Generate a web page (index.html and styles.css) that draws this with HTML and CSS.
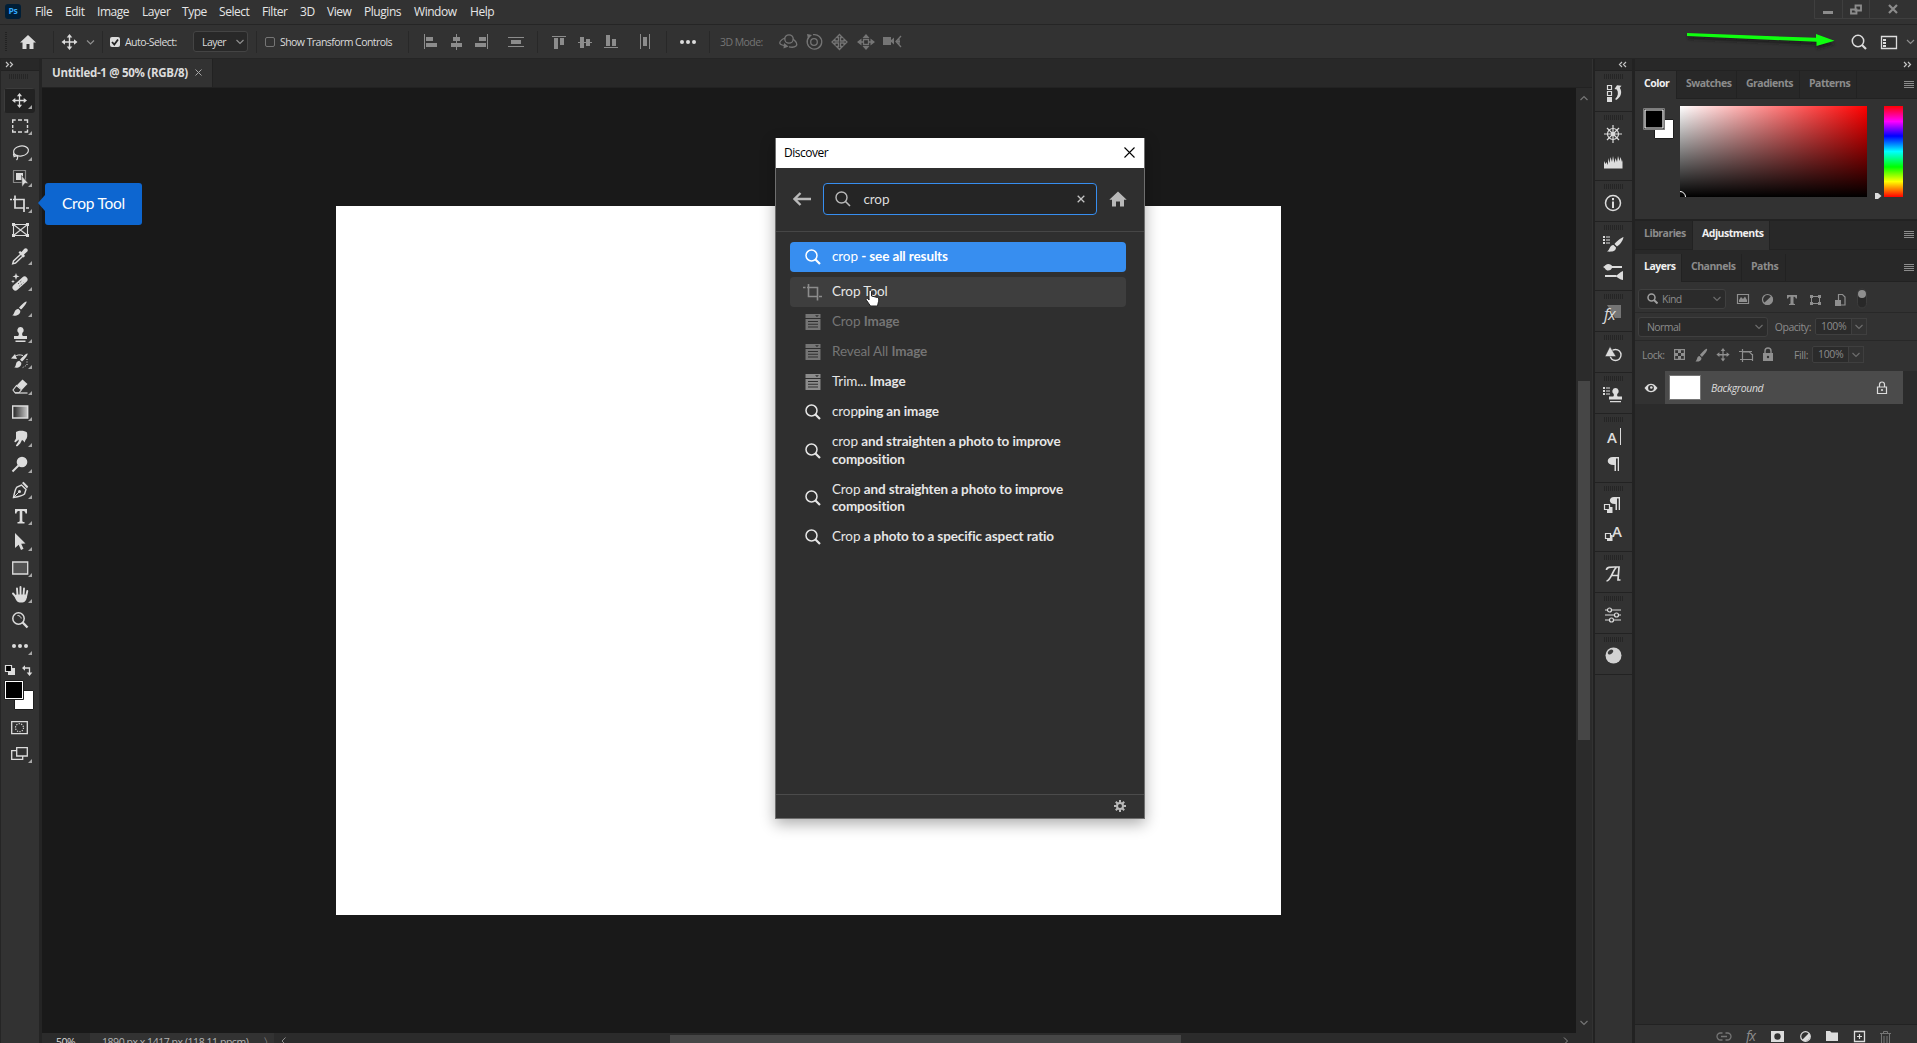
FILE: index.html
```html
<!DOCTYPE html>
<html lang="en">
<head>
<meta charset="utf-8">
<title>Untitled-1 @ 50% (RGB/8)</title>
<link rel="stylesheet" href="styles.css">
</head>
<body>
<div class="app">
  <header class="menubar">
    <div class="logo">Ps</div>
    <nav class="menu"><span style="width:30px">File</span><span style="width:32px">Edit</span><span style="width:45px">Image</span><span style="width:40px">Layer</span><span style="width:37px">Type</span><span style="width:43px">Select</span><span style="width:38px">Filter</span><span style="width:27px">3D</span><span style="width:37px">View</span><span style="width:50px">Plugins</span><span style="width:56px">Window</span><span style="width:30px">Help</span></nav>
    <div class="winbtns">
      <svg width="103" height="19" viewBox="1814 0 103 19"><path d="M1814.500 0V18.500H1917M1842.500 0V18M1869.500 0V18" stroke="#3f3f3f" fill="none"/><path d="M1823 11h10v3h-10z" fill="#8c8c8c"/><path d="M1855.500 5.500h5.500v5h-5.500zM1851 9.500h5.500v4h-5.500z" stroke="#8c8c8c" stroke-width="1.800" fill="#323232"/><path d="M1889 5l8 8M1897 5l-8 8" stroke="#8c8c8c" stroke-width="2.200"/></svg>
    </div>
  </header>

  <div class="options">
    <svg class="ico" width="103" height="33" viewBox="0 25 103 33"><path d="M6 32v19" stroke="#222" stroke-width="2" stroke-dasharray="1 1"/><path d="M28 35l8 7.500h-2.500V49h-4v-5h-3v5h-4v-6.500H20z" fill="#dcdcdc"/><path d="M53.500 31v22M102.500 31v22" stroke="#282828"/><path d="M69.500 36v12M63.500 42h12" stroke="#dcdcdc" stroke-width="1.400"/><path d="M69.500 34l2.800 3.500h-5.600zM69.500 50l2.800-3.500h-5.600zM61.500 42l3.500-2.800v5.600zM77.500 42l-3.500-2.800v5.600z" fill="#dcdcdc"/><path d="M87 40.500l3.500 3.500 3.500-3.500" stroke="#8f8f8f" fill="none" stroke-width="1.200"/></svg>
    <span class="cb on"><svg width="10" height="10" viewBox="0 0 10 10"><path d="M2 5l2.300 2.500L8 2.500" stroke="#222" stroke-width="1.800" fill="none"/></svg></span>
    <span class="lab" style="width:68px">Auto-Select:</span>
    <span class="drop">Layer<svg width="8" height="6" viewBox="0 0 8 6"><path d="M.5 1L4 4.500 7.500 1" stroke="#8f8f8f" fill="none" stroke-width="1.200"/></svg></span>
    <i class="vsep" style="margin:0 8px 0 8px"></i>
    <span class="cb"></span>
    <span class="lab" style="width:128px">Show Transform Controls</span>
    <svg class="ico" width="310" height="33" viewBox="408 25 310 33">
      <path d="M408.500 31v22M537.500 31v22M666.500 31v22M709.500 31v22" stroke="#282828"/>
      <g fill="#8c8c8c"><path d="M424 34h1v15h-1zM426 37h7v4h-7zM426 43h11v4h-11zM456 34h1v16h-1zM453 37h7v4h-7zM451 43h11v4h-11zM487 34h1v15h-1zM479 37h7v4h-7zM475 43h11v4h-11zM508 37h16v1h-16zM511 40h10v4h-10zM508 46h16v1h-16z"/>
      <path d="M552 36h14v1h-14zM554 38h4v11h-4zM560 38h4v7h-4zM578 42h14v1h-14zM580 37h4v11h-4zM586 39h4v7h-4zM604 47h14v1h-14zM606 35h4v11h-4zM612 39h4v7h-4zM640 34h1v15h-1zM643 37h4v9h-4zM649 34h1v15h-1z"/></g>
      <g fill="#dcdcdc"><circle cx="682" cy="42" r="2"/><circle cx="688" cy="42" r="2"/><circle cx="694" cy="42" r="2"/></g>
    </svg>
    <span class="lab dim" style="width:58px">3D Mode:</span>
    <svg class="ico" width="126" height="33" viewBox="778 25 126 33" fill="none" stroke="#757575" stroke-width="1.300">
      <circle cx="789" cy="39" r="4.200"/><path d="M785 38c-4 1.500-7 5-4 6.500 1.500 1 3 1 4.500 1M793 39c3 2.500 5 5 3 7-2 1.800-5 1.300-7 .8"/><path d="M784 43l4.500 3.500-5 2z" fill="#757575" stroke="none"/>
      <circle cx="814" cy="42" r="3.300"/><path d="M809 37a7.300 7.300 0 1 0 4-2.300"/><path d="M807 34l5 1-4 4z" fill="#757575" stroke="none"/>
      <path d="M839.500 34.500l3 3h-2v3.500h3.500v-2l3 3-3 3v-2h-3.500v3.500h2l-3 3-3-3h2V43H835v2l-3-3 3-3v2h3.500v-3.500h-2z"/>
      <g fill="#757575" stroke="none"><path d="M866 34l3.500 4h-7zM866 50l3.500-4h-7zM857 42l4.500-3.500v7zM875 42l-4.500-3.500v7z"/></g><path d="M863.500 39.500h5v5h-5z"/><path d="M858 42h5M869 42h5"/>
      <path d="M883 37h8v8h-8zM890 41l4-3.500v7z" fill="#757575" stroke="none"/><path d="M901 36l-5 5.500 5 5.500M896 41.500h4M899 38v7"/>
    </svg>
    <svg class="ico opt-right" width="233" height="33" viewBox="1684 25 233 33">
      <defs><filter id="soft" x="-10%" y="-60%" width="120%" height="260%"><feGaussianBlur stdDeviation="1.500"/></filter></defs>
      <path d="M1688 35.500l129 6v-4l18 6.500-18 5v-4l-129-6z" fill="#161616" filter="url(#soft)" opacity=".7"/>
      <path d="M1687 33l129 4.800V34l18.500 6.800-18 5.200v-4.200L1687 36z" fill="#0fff0f"/>
      <circle cx="1858" cy="41" r="5.700" fill="none" stroke="#dcdcdc" stroke-width="1.500"/><path d="M1862 45l4 4" stroke="#dcdcdc" stroke-width="2.200"/>
      <path d="M1881.500 36.500h15v12h-15z" stroke="#dcdcdc" fill="none" stroke-width="1.300"/><path d="M1883 39h3v2h-3zM1883 42h3v2h-3zM1883 45h3v2h-3z" fill="#dcdcdc"/>
      <path d="M1907 40l3.500 3.500 3.500-3.500" stroke="#8f8f8f" fill="none" stroke-width="1.200"/>
    </svg>
  </div>

  <main class="work">
    <aside class="toolbar">
      <div class="strip"><svg width="10" height="8" viewBox="0 0 10 8"><path d="M1 1l2.500 2.500L1 6M5 1l2.500 2.500L5 6" stroke="#c4c4c4" fill="none" stroke-width="1.200"/></svg></div>
      <div class="grip"></div>
      <div class="tools">
        <svg class="tool active" viewBox="0 0 32 26"><path d="M15.500 7v11M10 12.500h11" stroke="#dcdcdc" stroke-width="1.300"/><path d="M15.500 5l2.600 3.300h-5.200zM15.500 20l2.600-3.300h-5.200zM8 12.500l3.300-2.600v5.200zM23 12.500l-3.300-2.600v5.200z" fill="#dcdcdc"/><path class="tri" d="M28 17v4h-4z"/></svg>
        <svg class="tool" viewBox="0 0 32 26"><path d="M8.700 9V6h3M14 6h4M20 6h3.500v3M23.500 11v3M23.500 15.500V18h-3M18 18h-4M12 18H8.700v-2.500M8.700 14v-3" stroke="#dcdcdc" stroke-width="1.400" fill="none"/><path class="tri" d="M28 17v4h-4z"/></svg>
        <svg class="tool" viewBox="0 0 32 26"><ellipse cx="17" cy="11" rx="7.500" ry="5" transform="rotate(-10 17 11)" fill="none" stroke="#dcdcdc" stroke-width="1.200"/><path d="M10 13.500c-2 2 2.500 4 3 1.500M13 15c1 2 1 3.500-.5 5M9.500 17l3-1.500" fill="none" stroke="#dcdcdc" stroke-width="1.200"/><path class="tri" d="M28 17v4h-4z"/></svg>
        <svg class="tool" viewBox="0 0 32 26"><path d="M9.500 4.500h12v12h-12z" fill="none" stroke="#dcdcdc" stroke-width="1.200" stroke-dasharray="1 1"/><path d="M12 7h7v7h-7z" fill="#dcdcdc"/><path d="M17.500 9.500l7 8-3.500-.3-3 3.800z" fill="#dcdcdc" stroke="#323232" stroke-width=".6"/><path class="tri" d="M28 17v4h-4z"/></svg>
        <svg class="tool" viewBox="0 0 32 26"><path d="M11 3.500V16h9M6 7.500h2M9 7.500h11V20M22 16h3" fill="none" stroke="#dcdcdc" stroke-width="1.700"/><path class="tri" d="M28 17v4h-4z"/></svg>
        <svg class="tool" viewBox="0 0 32 26"><path d="M9.500 6.500h14v11h-14zM9.500 6.500l14 11M23.500 6.500l-14 11" fill="none" stroke="#dcdcdc" stroke-width="1.100"/><path d="M8 5h3v3H8zM22 5h3v3h-3zM8 16h3v3H8zM22 16h3v3h-3z" fill="#dcdcdc"/></svg>
        <svg class="tool" viewBox="0 0 32 26"><path d="M17 10l-7.500 7-.8 2.800 2.800-.8 7.500-7" fill="none" stroke="#dcdcdc" stroke-width="1.400"/><path d="M14.500 8.500l1.500-1.500 1.500 1 2.800-3.200c2-1.600 4.500.8 3 2.800L20 10.500l1 1.500-1.500 1.500z" fill="#dcdcdc"/><path class="tri" d="M28 17v4h-4z"/></svg>
        <svg class="tool" viewBox="0 0 32 26"><path d="M11.500 17.500l9-8" stroke="#dcdcdc" stroke-width="6" stroke-linecap="round"/><path d="M14 14l4-3.500M15.500 16l4-3.500" stroke="#323232" stroke-width="1" stroke-dasharray="1 1.500"/><path d="M12 3l.9 2.500 2.600.9-2.600.9L12 10l-.9-2.700-2.600-.9 2.600-.9zM9 9.500l.5 1.500 1.500.5-1.500.5L9 13.500 8.500 12 7 11.500 8.500 11z" fill="#dcdcdc"/><path class="tri" d="M28 17v4h-4z"/></svg>
        <svg class="tool" viewBox="0 0 32 26"><path d="M22.500 5.500c1 1-4 7-5.500 8l-2-1.800c1.500-2 6.500-7 7.500-6.200zM14.300 12.700l2 2c.3 4-4 5.500-8 4.800 2.500-1.500 1.500-6 6-6.800z" fill="#dcdcdc"/><path class="tri" d="M28 17v4h-4z"/></svg>
        <svg class="tool" viewBox="0 0 32 26"><path d="M16.500 5a3.200 3.200 0 0 1 2 5.700c-.7 1-.3 3 .5 3.300h4v3H10v-3h4c.8-.3 1.200-2.300.5-3.300a3.200 3.200 0 0 1 2-5.700zM11.500 18.500h10V20h-10z" fill="#dcdcdc"/><path class="tri" d="M28 17v4h-4z"/></svg>
        <svg class="tool" viewBox="0 0 32 26"><path d="M23.500 5.500c1 1-4 7-5.500 8l-2-1.800c1.500-2 6.500-7 7.500-6.200zM15.300 12.700l2 2c.3 4-3 5.500-7 4.800 2.500-1.500.5-6 5-6.800zM7 10.500l4-4.500 2 5z" fill="#dcdcdc"/><path d="M11 8.500c2-1.800 5-2 8-1" stroke="#dcdcdc" fill="none"/><path d="M23 11v6l-5 3" stroke="#dcdcdc" fill="none" stroke-dasharray="1 1.500"/><path class="tri" d="M28 17v4h-4z"/></svg>
        <svg class="tool" viewBox="0 0 32 26"><path d="M18.500 5.500l5 4.500-5.500 5.800-5.200-4.600z" fill="#dcdcdc"/><path d="M12.500 11.500l5 4.300-2.500 3h-4L9 16z" fill="none" stroke="#dcdcdc" stroke-width="1.100"/><path d="M11 19h12.500" stroke="#dcdcdc" stroke-width="1.200"/><path class="tri" d="M28 17v4h-4z"/></svg>
        <svg class="tool" viewBox="0 0 32 26"><defs><linearGradient id="gt"><stop offset="0" stop-color="#222"/><stop offset="1" stop-color="#ccc"/></linearGradient></defs><path d="M8.700 6h15v12h-15z" fill="url(#gt)" stroke="#dcdcdc" stroke-width="1.400"/><path class="tri" d="M28 17v4h-4z"/></svg>
        <svg class="tool" viewBox="0 0 32 26"><path d="M12 6c3-2 9-1.500 11 .5.500 3 .5 6-1.500 7.500l-1 2.500-1.200-1.800-1.300-.7-1.800 3.500-2.500 2.500c-.8.500-2.200.2-1.500-1l2.300-3.500.3-2-3 2.500c-1 .5-1.700-.2-1.300-1l1.500-2.500z" fill="#dcdcdc"/><path class="tri" d="M28 17v4h-4z"/></svg>
        <svg class="tool" viewBox="0 0 32 26"><circle cx="18" cy="10" r="5.300" fill="#dcdcdc"/><path d="M14.500 13.500L8.500 19.500" stroke="#dcdcdc" stroke-width="2"/><path class="tri" d="M28 17v4h-4z"/></svg>
        <svg class="tool" viewBox="0 0 32 26"><path d="M9.500 19.500c1-4.500 1.500-8.500 3.500-10.500l4.500-2 4.500 4.500-1.500 4.500c-2 2-6.500 2.800-11 3.500z" fill="none" stroke="#dcdcdc" stroke-width="1.400"/><path d="M10 19l5-5" stroke="#dcdcdc"/><circle cx="15.500" cy="13.500" r="1.500" fill="#dcdcdc"/><path d="M18 5l1.500-1.200 4.700 4.600-1.200 2z" fill="#dcdcdc"/><path class="tri" d="M28 17v4h-4z"/></svg>
        <svg class="tool" viewBox="0 0 32 26"><path d="M11 5h12v4.500h-1.500C21.300 7.500 20.500 7 18.300 7v9.500c0 1.200.5 1.500 2.200 1.500v1.500h-7V18c1.700 0 2.200-.3 2.200-1.500V7c-2.200 0-3 .5-3.200 2.500H11z" fill="#dcdcdc"/><path class="tri" d="M28 17v4h-4z"/></svg>
        <svg class="tool" viewBox="0 0 32 26"><path d="M11 3l10.500 10.500-4.300.3 2.300 5-2.500 1.200-2.300-5.200L11 18z" fill="#dcdcdc"/><path class="tri" d="M28 17v4h-4z"/></svg>
        <svg class="tool" viewBox="0 0 32 26"><path d="M8.700 6h15v12h-15z" fill="#535353" stroke="#dcdcdc" stroke-width="1.300"/><path class="tri" d="M28 17v4h-4z"/></svg>
        <svg class="tool" viewBox="0 0 32 26"><path d="M9 11.500l4 4.500M13.500 13.500L13 6.500M16.500 13V5M19.500 13.500L20 6.500M22 15l1.300-6" stroke="#dcdcdc" stroke-width="1.900" stroke-linecap="round"/><path d="M12.500 12.500h9l1.500 1c0 4-2 7-4.500 7h-3c-2 0-4-3-5-6z" fill="#dcdcdc"/><path class="tri" d="M28 17v4h-4z"/></svg>
        <svg class="tool" viewBox="0 0 32 26"><circle cx="14.500" cy="10.500" r="5.700" fill="none" stroke="#dcdcdc" stroke-width="1.500"/><path d="M13.500 7.500c2 0 3.500 1.200 3.700 3" fill="none" stroke="#dcdcdc"/><path d="M18.700 14.500l4.800 5" stroke="#dcdcdc" stroke-width="2.400"/></svg>
        <svg class="tool" viewBox="0 0 32 26"><g fill="#dcdcdc"><circle cx="10" cy="12" r="2"/><circle cx="16" cy="12" r="2"/><circle cx="22" cy="12" r="2"/></g><path class="tri" d="M28 17v4h-4z"/></svg>
      </div>
      <svg width="38" height="110" viewBox="1 660 38 110">
        <path d="M10 668h5v7h-7v-4z" fill="#dcdcdc"/><path d="M5.500 665.500h6v6h-6z" fill="#000" stroke="#dcdcdc" stroke-width="1.200"/><path d="M24 668h5.500v5" stroke="#dcdcdc" stroke-width="1.300" fill="none"/><path d="M22 668l3-2.800v5.600zM29.500 676l-2.800-3.500h5.600z" fill="#dcdcdc"/>
        <path d="M14.500 690.500h19v19h-19z" fill="#fff" stroke="#1e1e1e"/><path d="M4.500 680.500h19v19h-19z" fill="#fff" stroke="#1e1e1e"/><path d="M6 682h16v16H6z"/>
        <path d="M11.700 721.700h15.600v12H11.700z" fill="none" stroke="#dcdcdc" stroke-width="1.300"/><circle cx="19.500" cy="727.700" r="4" fill="none" stroke="#dcdcdc" stroke-width="1.200" stroke-dasharray="1.200 1.300"/>
        <path d="M11.700 750.700h11v8.600h-11z" fill="none" stroke="#dcdcdc" stroke-width="1.300"/><path d="M16.700 747.700h10.600v8.300H16.700z" fill="#323232" stroke="#dcdcdc" stroke-width="1.300"/><path class="tri" d="M32 759v4h-4z"/>
      </svg>
      <div class="tip">Crop Tool</div>
    </aside>

    <section class="doc">
      <div class="doctabs"><div class="doctab"><span>Untitled-1 @ 50% (RGB/8)</span><svg width="7" height="7" viewBox="0 0 7 7"><path d="M.5.5l6 6M6.500.5l-6 6" stroke="#a8a8a8"/></svg></div></div>
      <div class="view">
        <div class="stage"><div class="artboard"></div></div>
        <div class="vscroll"><svg width="8" height="6" viewBox="0 0 8 6"><path d="M.5 5L4 1.500 7.500 5" stroke="#757575" fill="none" stroke-width="1.200"/></svg><i></i><svg class="down" width="8" height="6" viewBox="0 0 8 6"><path d="M.5 1L4 4.500 7.500 1" stroke="#757575" fill="none" stroke-width="1.200"/></svg></div>
      </div>
      <div class="status"><span class="pct">50%</span><span class="dims">1890 px x 1417 px (118.11 ppcm)</span><span class="ang">〉</span><svg class="lt" width="6" height="8" viewBox="0 0 6 8"><path d="M4.500.5L1 4l3.500 3.500" stroke="#8c8c8c" fill="none"/></svg><i class="hthumb"></i><svg class="rt" width="6" height="8" viewBox="0 0 6 8"><path d="M1 .5L4.500 4 1 7.500" stroke="#8c8c8c" fill="none"/></svg></div>
    </section>

    <aside class="dock">
      <div class="strip r"><svg width="10" height="8" viewBox="0 0 10 8"><path d="M4 1L1.500 3.500 4 6M8 1L5.500 3.500 8 6" stroke="#c4c4c4" fill="none" stroke-width="1.200"/></svg></div>
      <div class="cell"><svg viewBox="0 0 28 28"><path d="M8.500 6.500h4v4h-4zM8.500 12.500h4v4h-4z" fill="none" stroke="#dcdcdc" stroke-width="1.200"/><path d="M8 18h5v5H8z" fill="#dcdcdc"/><path d="M15.500 10l2.500-3.700 4.500.5-1.700 2c2.800 4.500 1.200 9.700-3.800 12.200l-.8-1c3-3 3.500-6.500 1.600-9.500z" fill="#dcdcdc"/></svg></div>
      <div class="cell"><svg viewBox="0 0 28 28"><circle cx="14" cy="14" r="5.500" fill="none" stroke="#dcdcdc" stroke-width="1.200"/><circle cx="14" cy="14" r="2" fill="#dcdcdc"/><path d="M14 5v18M5 14h18M8 8l12 12M20 8L8 20" stroke="#dcdcdc" stroke-width="1.200"/></svg><svg viewBox="0 0 28 28"><path d="M5 19v-6l1.500 3 1-2 1.500 3V10l1.500 5 1-6 1.500 5 1-6 1.500 7 1-5 1.500 4 1-6 1.500 5 1-4 1.500 5 .5-2v8.500H5z" fill="#dcdcdc"/></svg></div>
      <div class="cell"><svg viewBox="0 0 28 28"><circle cx="14" cy="14" r="7.500" fill="none" stroke="#dcdcdc" stroke-width="1.500"/><path d="M13 9h2v2.200h-2zM13 12.500h2V19h-2z" fill="#dcdcdc"/></svg></div>
      <div class="cell"><svg viewBox="0 0 28 28"><path d="M4 6h2v2H4zM4 9h2v2H4zM4 12h2v2H4zM7 6.500h4v1H7zM7 9.500h4v1H7zM7 12.500h4v1H7z" fill="#dcdcdc"/><path d="M24.500 7c-.5 4-4 8-6.500 9.500L15.500 14C17.500 11.500 21.500 8 24.500 7zM14.500 15l2.500 2.500c0 4-4.500 4.500-9 4 3-1.500 2-6 6.500-6.500z" fill="#dcdcdc"/></svg><svg viewBox="0 0 28 28"><path d="M4 9c2-.5 2.500-3 5-3s3.500 1 4 2h10v2H13c-.5 1-1.500 2.500-4 2.500S6.500 10 4 9zM6 17h11v2H6z" fill="#dcdcdc"/><path d="M16 18c3-1 5-4 8-5v9c-3 0-5-2.500-8-4z" fill="#dcdcdc"/></svg></div>
      <div class="cell"><svg viewBox="0 0 28 28"><path d="M8 6h14v13h-6z" fill="#757575"/><text x="5" y="21" class="fx">fx</text></svg></div>
      <div class="cell"><svg viewBox="0 0 28 28"><circle cx="16.500" cy="15" r="5.500" fill="none" stroke="#dcdcdc" stroke-width="1.400"/><path d="M11 6.500l6 10H6z" fill="#dcdcdc" stroke="#323232" stroke-width=".5"/></svg></div>
      <div class="cell"><svg viewBox="0 0 28 28"><path d="M4 6h2v2H4zM4 9h2v2H4zM4 12h2v2H4zM7 6.500h4v1H7zM7 9.500h4v1H7zM7 12.500h4v1H7z" fill="#dcdcdc"/><path d="M16.500 7a3.200 3.200 0 0 1 2 5.700c-.7 1-.3 2.500.5 2.800h4v3H10v-3h4c.8-.3 1.200-1.800.5-2.800a3.200 3.200 0 0 1 2-5.700zM11 20h11v1.300H11z" fill="#dcdcdc"/></svg></div>
      <div class="cell"><svg viewBox="0 0 28 28"><text x="8" y="20.500" class="gl">A</text><path d="M21.500 6v17" stroke="#dcdcdc"/></svg><svg viewBox="0 0 28 28"><path d="M14 7h6v14h-1.300V8.500H17V21h-1.500v-6C6.500 15.500 7 7 14 7z" fill="#dcdcdc"/></svg></div>
      <div class="cell"><svg viewBox="0 0 28 28"><path d="M15 6h6v13h-1.300V7.500H18V19h-1.500v-6C9 13.500 9.500 6 15 6z" fill="#dcdcdc"/><path d="M8 16h5.500v6H8z" fill="#dcdcdc"/><path d="M5.500 13.500h5v5h-5z" fill="#323232" stroke="#dcdcdc" stroke-width="1.200"/></svg><svg viewBox="0 0 28 28"><text x="13" y="18" class="gl">A</text><path d="M8 16h5.500v6H8z" fill="#dcdcdc"/><path d="M6.500 14.500h5v5h-5z" fill="#323232" stroke="#dcdcdc" stroke-width="1.200"/></svg></div>
      <div class="cell"><svg viewBox="0 0 28 28"><path d="M7.500 10c0-3 4-3 8-3h4.500l-1 13h2.500M17.500 7.500C14 9 12 21 7.500 21M12.500 15.500h7" fill="none" stroke="#dcdcdc" stroke-width="1.700"/></svg></div>
      <div class="cell"><svg viewBox="0 0 28 28"><path d="M6 9h16M6 14h16M6 19h16" stroke="#dcdcdc" stroke-width="1.200"/><g fill="#323232" stroke="#dcdcdc" stroke-width="1.200"><circle cx="10.500" cy="9" r="2"/><circle cx="17.500" cy="14" r="2"/><circle cx="12.500" cy="19" r="2"/></g></svg></div>
      <div class="cell"><svg viewBox="0 0 28 28"><circle cx="14.500" cy="13.500" r="8" fill="#d2d2d2"/><ellipse cx="11.500" cy="10" rx="3" ry="2" transform="rotate(-40 11.500 10)" fill="#3c3c3c"/></svg></div>
    </aside>

    <aside class="panels">
      <div class="strip r"><svg width="10" height="8" viewBox="0 0 10 8"><path d="M1 1l2.500 2.500L1 6M5 1l2.500 2.500L5 6" stroke="#c4c4c4" fill="none" stroke-width="1.200"/></svg></div>
      <div class="tabs"><b class="on" style="width:42px">Color</b><b style="width:60px">Swatches</b><b style="width:63px">Gradients</b><b style="width:57px">Patterns</b><i class="burger"></i></div>
      <div class="colorbody">
        <svg width="43" height="40" viewBox="1643 106 43 40"><path d="M1654.500 119.500h19v19h-19z" fill="#fff" stroke="#1e1e1e"/><path d="M1643.500 108.500h21v21h-21z" fill="#000" stroke="#7d7d7d"/><path d="M1645 110h18v18h-18z" fill="#000" stroke="#fff" stroke-width="1.200"/></svg>
        <div class="field"><i></i></div>
        <svg class="knob" width="8" height="8" viewBox="0 0 8 8"><path d="M1 1h3l3.500 3L4 7H1z" fill="#dcdcdc"/></svg>
        <div class="hue"></div>
      </div>
      <div class="tabs mid"><b style="width:58px">Libraries</b><b class="on" style="width:77px">Adjustments</b><i class="burger"></i></div>
      <div class="tabs low"><b class="on" style="width:47px">Layers</b><b style="width:60px">Channels</b><b style="width:44px">Paths</b><i class="burger"></i></div>
      <div class="row filter"><span class="sel kind"><svg width="11" height="11" viewBox="0 0 11 11"><circle cx="4.500" cy="4.500" r="3.500" fill="none" stroke="#a0a0a0" stroke-width="1.500"/><path d="M7 7l3.500 3.500" stroke="#a0a0a0" stroke-width="2"/></svg><em>Kind</em><svg width="8" height="6" viewBox="0 0 8 6"><path d="M.5 1L4 4.500 7.500 1" stroke="#6c6c6c" fill="none" stroke-width="1.200"/></svg></span>
        <svg width="132" height="22" viewBox="1736 288 132 22"><g fill="#8f8f8f"><path d="M1737.500 294.500h11v9h-11z" fill="none" stroke="#8f8f8f" stroke-width="1.200"/><path d="M1739 302v-2l2-3 2 2 2-2.500 2 3.500v2z"/><circle cx="1767.500" cy="299.500" r="5" fill="none" stroke="#8f8f8f" stroke-width="1.200"/><path d="M1771.500 296a5.500 5.500 0 0 1-8 7.500z"/><path d="M1787 295h10v3.500h-1.200c-.2-1.300-.8-1.800-2.300-1.800v6.300c0 .8.500 1 1.500 1v1h-6v-1c1 0 1.500-.2 1.500-1v-6.300c-1.500 0-2.100.5-2.300 1.800h-1.200z"/><path d="M1811.500 296.500h8v7h-8z" fill="none" stroke="#8f8f8f"/><path d="M1810 295h3v3h-3zM1818 295h3v3h-3zM1810 302h3v3h-3zM1818 302h3v3h-3z"/><path d="M1838.500 294.500h4l2.500 2.500v8h-6.500z" fill="none" stroke="#8f8f8f" stroke-width="1.200"/><path d="M1835 300h6v6h-6z"/></g><path d="M1857.500 293.500a4.500 4.500 0 0 1 9 0v10a4.500 4.500 0 0 1-9 0z" fill="#282828" stroke="#3c3c3c"/><circle cx="1862" cy="294" r="4" fill="#8f8f8f"/></svg>
      </div>
      <div class="row blend"><span class="sel mode"><em>Normal</em><svg width="8" height="6" viewBox="0 0 8 6"><path d="M.5 1L4 4.500 7.500 1" stroke="#6c6c6c" fill="none" stroke-width="1.200"/></svg></span><em class="rlab" style="width:47px">Opacity:</em><span class="num">100%</span><span class="caret"><svg width="8" height="6" viewBox="0 0 8 6"><path d="M.5 1L4 4.500 7.500 1" stroke="#6c6c6c" fill="none" stroke-width="1.200"/></svg></span></div>
      <div class="row locks"><em class="locklab">Lock:</em>
        <svg width="104" height="20" viewBox="1672 345 104 20"><g fill="#8f8f8f"><path d="M1674.600 349.600h9.800v9.800h-9.800z" fill="none" stroke="#8f8f8f" stroke-width="1.200"/><path d="M1678 350h3v3h-3zM1675 353h3v3h-3zM1681 353h3v3h-3zM1678 356h3v3h-3z"/><path d="M1707 349c1 1-3 6-5 8l-2-2c1.500-2 6-7 7-6zM1699.500 356l2 2c0 3-3 4-6 3.500 2-1.500 1-5 4-5.500z"/><path d="M1723 348l2.300 3h-1.700v3h3v-1.700l3 2.300-3 2.300V355.500h-3v3h1.700l-2.300 3-2.300-3h1.700v-3h-3v1.400l-3-2.300 3-2.300v1.700h3v-3h-1.700z"/><path d="M1742.500 349v13M1739 351.500h13l-3 0M1752.500 354v7M1740 359.500h13M1742.500 352h7l3 3v4.500" fill="none" stroke="#8f8f8f" stroke-width="1.200"/><path d="M1763 353h10v8h-10z"/><path d="M1765 353v-2a3 3 0 0 1 6 0v2" fill="none" stroke="#8f8f8f" stroke-width="1.400"/></g><circle cx="1768" cy="357" r="1.200" fill="#323232"/></svg>
        <em class="rlab" style="width:36px">Fill:</em><span class="num">100%</span><span class="caret"><svg width="8" height="6" viewBox="0 0 8 6"><path d="M.5 1L4 4.500 7.500 1" stroke="#6c6c6c" fill="none" stroke-width="1.200"/></svg></span></div>
      <div class="layers">
        <div class="layer"><div class="eye"><svg width="14" height="10" viewBox="0 0 14 10"><path d="M.5 5C3 1.500 5 .7 7 .7S11 1.500 13.500 5C11 8.500 9 9.300 7 9.300S3 8.500.5 5z" fill="#dcdcdc"/><circle cx="7" cy="5" r="2.900" fill="#323232"/><circle cx="7.300" cy="4.500" r="1.300" fill="#dcdcdc"/></svg></div>
          <div class="lrow"><div class="thumb"></div><em>Background</em><svg width="12" height="14" viewBox="0 0 12 14"><path d="M1.500 6h9v6.500h-9zM3.500 6V3.500a2.500 2.500 0 0 1 5 0V6" fill="none" stroke="#dcdcdc" stroke-width="1.200"/><circle cx="6" cy="9" r="1.100" fill="#dcdcdc"/></svg></div></div>
      </div>
      <div class="lfoot"><svg width="182" height="18" viewBox="1716 1025 182 18"><g fill="none" stroke="#757575" stroke-width="1.300"><path d="M1722.500 1033h-2a3.500 3.500 0 0 0 0 7h2M1725.500 1033h2a3.500 3.500 0 0 1 0 7h-2M1721 1036.500h6"/></g><text x="1746" y="1041" class="fx dimfx">fx</text><path d="M1771 1031h13v11h-13z" fill="#dcdcdc"/><circle cx="1777.500" cy="1036.500" r="3.200" fill="#323232"/><circle cx="1805.500" cy="1036.500" r="4.800" fill="none" stroke="#dcdcdc" stroke-width="1.200"/><path d="M1809 1033a5 5 0 0 1-7 7z" fill="#dcdcdc"/><path d="M1826 1031h4l1.500 1.500h6.500V1041h-12z" fill="#dcdcdc"/><path d="M1854.500 1031.500h10v10h-10z" fill="none" stroke="#dcdcdc" stroke-width="1.300"/><path d="M1859.500 1034v5M1857 1036.500h5" stroke="#dcdcdc" stroke-width="1.200"/><path d="M1880 1033.500h11M1883.500 1033v-1.500h4v1.500M1881.500 1034v9M1889.500 1034v9M1884 1036v7M1887 1036v7" stroke="#757575" fill="none"/></svg></div>
    </aside>
  </main>

  <div class="dialog">
    <div class="dtitle"><span>Discover</span><svg width="11" height="11" viewBox="0 0 11 11"><path d="M.5.5l10 10M10.500.5l-10 10" stroke="#000" stroke-width="1.100"/></svg></div>
    <div class="dhead">
      <svg width="19" height="14" viewBox="0 0 19 14"><path d="M18 7H2M7.500 1L1.500 7l6 6" fill="none" stroke="#b9b9b9" stroke-width="2.400"/></svg>
      <div class="search"><svg width="16" height="16" viewBox="0 0 16 16"><circle cx="6.500" cy="6.500" r="5.500" fill="none" stroke="#b9b9b9" stroke-width="1.400"/><path d="M10.500 10.500l4.500 4.500" stroke="#b9b9b9" stroke-width="1.600"/></svg><span>crop</span><svg width="8" height="8" viewBox="0 0 8 8"><path d="M.7.7l6.600 6.600M7.300.7L.7 7.300" stroke="#c4c4c4" stroke-width="1.300"/></svg></div>
      <svg width="18" height="16" viewBox="0 0 18 16"><path d="M9 .5l8.700 8.300H15V15.500h-4v-5H7v5H3V8.800H.3z" fill="#b9b9b9"/></svg>
    </div>
    <ul class="results">
      <li class="sel1"><svg viewBox="0 0 16 16"><use href="#mag"/></svg><span>crop <b>- see all results</b></span></li>
      <li class="hov"><svg class="cropi" viewBox="0 0 19 17"><path d="M5.500 0v12.500h9M0 3.500h2.500M4 3.500h10.500V16.500M16 12.500h3" fill="none" stroke="#8c8c8c" stroke-width="1.600"/></svg><span>Crop Tool</span></li>
      <li class="off"><svg viewBox="0 0 16 16"><use href="#cmd"/></svg><span>Crop <b>Image</b></span></li>
      <li class="off"><svg viewBox="0 0 16 16"><use href="#cmd"/></svg><span>Reveal All <b>Image</b></span></li>
      <li class="cmd"><svg viewBox="0 0 16 16"><use href="#cmd"/></svg><span>Trim... <b>Image</b></span></li>
      <li><svg viewBox="0 0 16 16"><use href="#mag"/></svg><span>crop<b>ping an image</b></span></li>
      <li class="two"><svg viewBox="0 0 16 16"><use href="#mag"/></svg><span>crop <b>and straighten a photo to improve<br>composition</b></span></li>
      <li class="two"><svg viewBox="0 0 16 16"><use href="#mag"/></svg><span>Crop <b>and straighten a photo to improve<br>composition</b></span></li>
      <li><svg viewBox="0 0 16 16"><use href="#mag"/></svg><span>Crop <b>a photo to a specific aspect ratio</b></span></li>
    </ul>
    <div class="dfoot"><svg width="12" height="12" viewBox="0 0 12 12"><circle cx="6" cy="6" r="3" fill="none" stroke="#b9b9b9" stroke-width="2"/><path d="M6 0v2.500M6 9.500V12M0 6h2.500M9.500 6H12M1.800 1.800l1.700 1.700M8.500 8.500l1.700 1.700M10.200 1.800L8.500 3.500M3.500 8.500l-1.700 1.700" stroke="#b9b9b9" stroke-width="2"/></svg></div>
    <svg class="hand" width="15" height="18" viewBox="0 0 15 18"><path d="M4.500 1.500c1-.8 2 0 2 1V7l6 1.500c1.500.5 1.500 2 1 4l-1 4.500h-7L1.300 11c-.8-1.500.7-2.200 2-1L4 11V2.500z" fill="#fff" stroke="#222" stroke-width="1"/></svg>
  </div>
  <svg class="defs" width="0" height="0"><symbol id="mag" viewBox="0 0 16 16"><circle cx="6.500" cy="6.500" r="5.500" fill="none" stroke="currentColor" stroke-width="1.500"/><path d="M10.500 10.500l4.500 4.500" stroke="currentColor" stroke-width="2.200"/></symbol><symbol id="cmd" viewBox="0 0 16 16"><path fill-rule="evenodd" d="M.5 0h15v4H.5zM10 1.300h4L12 3zM.5 5h15v11H.5zM3 7v1h10V7zM3 9.700v1h10v-1zM3 12.500v1h10v-1z" fill="currentColor"/></symbol></svg>
</div>
</body>
</html>
```
FILE: styles.css
```css
* { box-sizing: border-box; }
html, body { margin: 0; height: 100%; overflow: hidden; background: #191919; }
body { font-family: "Open Sans", "Noto Sans", sans-serif; font-size: 10.5px; letter-spacing: -0.55px; color: #dcdcdc; }
svg { display: block; flex: none; }
em { font-style: normal; }
.app { position: relative; width: 1917px; height: 1043px; display: flex; flex-direction: column; overflow: hidden; contain: strict; background: #323232; }
.defs { position: absolute; top: 0; left: 0; }

.menubar { flex: none; height: 25px; display: flex; align-items: center; border-bottom: 1px solid #252525; }
.logo { width: 16px; height: 15px; margin: -1px 0 0 5px; border-radius: 3px; background: #001e36; color: #31a8ff; font-size: 8.5px; font-weight: 700; line-height: 14px; text-align: center; letter-spacing: -0.2px; }
.menu { display: flex; margin: -2px 0 0 14px; font-size: 12px; letter-spacing: -0.45px; color: #e6e6e6; white-space: nowrap; }
.menu span { flex: none; }
.winbtns { margin-left: auto; align-self: flex-start; }

.options { flex: none; height: 34px; display: flex; align-items: center; border-bottom: 1px solid #252525; }
.cb { flex: none; width: 10px; height: 10px; margin: 0 5px 0 7px; border: 1px solid #757575; border-radius: 2px; }
.vsep + .cb { margin-left: 0; }
.cb.on { border: 0; background: #dcdcdc; }
.lab { flex: none; white-space: nowrap; }
.dim { color: #757575; margin-left: 2px; }
.drop { flex: none; width: 55px; height: 21px; padding: 0 3px 0 8px; display: flex; align-items: center; justify-content: space-between; border: 1px solid #444; border-radius: 3px; background: #282828; }
.vsep { flex: none; width: 1px; height: 22px; background: #282828; }
.opt-right { margin-left: auto; }

.work { flex: 1; min-height: 0; display: flex; }
.strip { flex: none; height: 12px; padding: 2px 4px 0; background: #282828; border-bottom: 1px solid #222; }
.strip.r { display: flex; justify-content: flex-end; }
.tri { fill: #a8a8a8; }

.toolbar { position: relative; flex: none; width: 42px; border-left: 1px solid #252525; border-right: 3px solid #242424; }
.grip { width: 20px; height: 5px; margin: 3px 0 9px 8px; background: repeating-linear-gradient(90deg, #262626 0 1px, transparent 1px 2px); }
.tools { width: 32px; margin-left: 3px; }
.tool { width: 32px; height: 26px; }
.tool.active { background: linear-gradient(#222, #222) no-repeat; background-size: 31px 25px; box-shadow: inset 0 0 0 1px #3c3c3c; clip-path: inset(0 1px 1px 0 round 3px); }
.tip { position: absolute; left: 44px; top: 124px; width: 97px; height: 42px; border-radius: 3px; background: #0d66d0; color: #fff; font-family: Lato, sans-serif; font-size: 15.5px; letter-spacing: -0.25px; line-height: 41px; text-align: center; z-index: 3; }
.tip::before { content: ""; position: absolute; left: -7px; top: 12px; border: 8px solid transparent; border-left: 0; border-right: 7px solid #0d66d0; }

.doc { flex: 1; min-width: 0; display: flex; flex-direction: column; }
.doctabs { flex: none; height: 29px; display: flex; background: #282828; border-bottom: 1px solid #222; }
.doctab { width: 171px; padding: 0 10px 1px; display: flex; align-items: center; justify-content: space-between; background: #323232; border-right: 1px solid #222; font-size: 11.5px; font-weight: 700; letter-spacing: -0.3px; white-space: nowrap; }
.view { flex: 1; min-height: 0; display: flex; background: #191919; }
.stage { flex: 1; padding: 118px 0 0 294px; }
.artboard { width: 945px; height: 709px; background: #fff; }
.vscroll { width: 16px; background: #2b2b2b; display: flex; flex-direction: column; align-items: center; padding: 7px 0; }
.vscroll i { width: 12px; height: 359px; margin-top: 280px; background: #464646; }
.vscroll .down { margin-top: auto; }
.status { flex: none; height: 10px; display: flex; background: #2b2b2b; line-height: 18px; font-size: 10.5px; letter-spacing: -0.45px; white-space: nowrap; overflow: hidden; }
.pct { width: 48px; padding-left: 14px; }
.dims { width: 166px; padding-left: 12px; background: #323232; color: #b4b4b4; }
.ang { width: 18px; padding-left: 7px; background: #323232; color: #b4b4b4; }
.status svg { margin: 4px 0 0 7px; }
.hthumb { width: 511px; height: 10px; margin: 2px 0 0 383px; background: #464646; }
.status .rt { margin-left: 382px; }

.dock { flex: none; width: 42px; border-left: 2px solid #222; border-right: 3px solid #222; background: #323232; margin-left: 1px; }
.cell { padding: 8px 0 4px 4px; border-bottom: 1px solid #222; background: repeating-linear-gradient(90deg, #252525 0 1px, transparent 1px 2px) 9px 3px / 20px 5px no-repeat; }
.cell svg { width: 28px; height: 28px; }
.gl { font: 600 15px "Open Sans", sans-serif; fill: #dcdcdc; }
.fx { font: italic 16px "Open Sans", sans-serif; letter-spacing: -1px; fill: #dcdcdc; }
.dimfx { font-size: 14px; fill: #8c8c8c; }

.panels { flex: none; width: 282px; display: flex; flex-direction: column; background: #323232; }
.tabs { flex: none; height: 28px; display: flex; background: #282828; border-bottom: 1px solid #222; }
.tabs b { border-right: 1px solid #222; padding-left: 9px; line-height: 25px; font-size: 10.5px; font-weight: 700; letter-spacing: -0.5px; color: #8c8c8c; white-space: nowrap; }
.tabs .on { background: #323232; color: #f0f0f0; margin-bottom: -1px; }
.burger { width: 10px; height: 7px; margin: 10px 3px 0 auto; background: repeating-linear-gradient(#8c8c8c 0 1px, transparent 1px 2px); }
.colorbody { flex: none; height: 120px; padding: 7px 0 0 8px; display: flex; }
.field { position: relative; width: 187px; height: 91px; margin-left: -6px; overflow: hidden; background: linear-gradient(transparent, #000), linear-gradient(90deg, #fff, #f00); }
.field i { position: absolute; left: -6px; bottom: -6px; width: 12px; height: 12px; border: 1px solid #fff; border-radius: 50%; }
.knob { margin: 86px 0 0 7px; }
.hue { width: 19px; height: 91px; margin-left: 2px; background: linear-gradient(#f00, #f0f 17%, #00f 33%, #0ff 50%, #0f0 67%, #ff0 83%, #f00); }
.mid { height: 31px; border-top: 2px solid #222; border-bottom: 1px solid #222; }
.low { height: 32px; border-top: 4px solid #282828; }
.row { flex: none; display: flex; align-items: center; color: #8c8c8c; border-bottom: 1px solid #282828; }
.filter { height: 31px; padding-top: 3px; }
.blend { height: 28px; }
.locks { height: 30px; padding-bottom: 3px; border: 0; }
.sel { height: 20px; margin-left: 3px; padding: 0 4px 0 8px; display: flex; align-items: center; justify-content: space-between; border: 1px solid #3f3f3f; border-radius: 3px; background: #2b2b2b; }
.kind { width: 88px; margin-right: 10px; }
.kind em { margin: 0 auto 0 4px; }
.mode { width: 130px; }
.rlab { text-align: right; padding-right: 4px; letter-spacing: -0.45px; }
.num { width: 37px; height: 17px; line-height: 15px; padding-left: 5px; border: 1px solid #3f3f3f; border-radius: 2px 0 0 2px; background: #2b2b2b; letter-spacing: -0.35px; }
.caret { width: 16px; height: 17px; margin-left: -1px; padding: 5px 3px; border: 1px solid #3f3f3f; }
.locklab { width: 37px; padding-left: 7px; }
.layers { flex: 1; background: #2b2b2b; border-bottom: 1px solid #222; }
.layer { display: flex; width: 268px; height: 33px; }
.eye { width: 30px; padding: 12px 0 0 9px; background: #323232; }
.lrow { flex: 1; display: flex; align-items: center; padding: 0 15px 0 4px; background: #4b4b4b; }
.thumb { width: 32px; height: 25px; background: #fff; border: 1px solid #757575; }
.lrow em { margin: 0 auto 0 10px; font-style: italic; letter-spacing: -0.35px; }
.lfoot { flex: none; height: 18px; padding-left: 81px; }

.dialog { position: absolute; left: 775px; top: 138px; width: 370px; height: 681px; display: flex; flex-direction: column; border: 1px solid #6e6e6e; border-top: 0; background: #2f2f2f; box-shadow: 0 5px 14px rgba(0, 0, 0, .32); font-family: Lato, "Open Sans", sans-serif; font-size: 13.5px; letter-spacing: -0.12px; z-index: 5; }
.dtitle { height: 30px; flex: none; padding: 0 9px 2px 8px; display: flex; align-items: center; justify-content: space-between; background: #fff; color: #000; font-family: "Open Sans", sans-serif; font-size: 12px; letter-spacing: -0.5px; }
.dhead { flex: none; height: 64px; display: flex; align-items: center; padding: 0 17px 2px 17px; justify-content: space-between; border-bottom: 1px solid #464646; }
.search { width: 274px; height: 32px; margin: 0 0 0 -2px; display: flex; align-items: center; padding: 0 11px; border: 1px solid #378ef0; border-radius: 4px; background: #252525; }
.search span { margin: 0 auto 0 13px; }
.results { flex: 1; margin: 0; padding: 10px 18px 0 14px; list-style: none; color: #e6e6e6; }
.results li { height: 30px; display: flex; align-items: center; padding-left: 15px; border-radius: 4px; line-height: 17.500px; white-space: nowrap; }
.results li.two { height: 47.500px; }
.results li svg { width: 16px; height: 16px; margin-right: 11px; }
.results li .cropi { width: 19px; height: 17px; margin: 0 10px 0 -2px; }
.results b { font-weight: 700; }
.results .sel1 { background: #378ef0; color: #fff; margin-bottom: 5px; }
.results .hov { background: #3e3e3e; }
.results .off { color: #757575; }
.results .cmd svg { color: #8c8c8c; }
.dfoot { flex: none; height: 24px; display: flex; justify-content: flex-end; padding: 5px 18px 0 0; border-top: 1px solid #4b4b4b; background: #323232; }
.hand { position: absolute; left: 89px; top: 151px; }
```
